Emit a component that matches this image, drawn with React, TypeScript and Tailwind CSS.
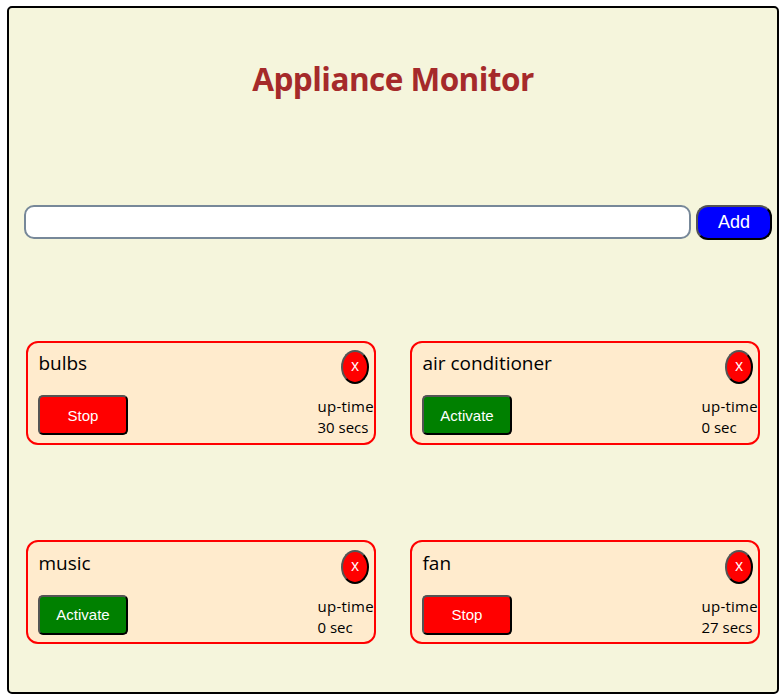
type Appliance = { name: string; running: boolean; time: string };

const rows: Appliance[][] = [
  [
    { name: 'bulbs', running: true, time: '30 secs' },
    { name: 'air conditioner', running: false, time: '0 sec' },
  ],
  [
    { name: 'music', running: false, time: '0 sec' },
    { name: 'fan', running: true, time: '27 secs' },
  ],
];

function Card({ item }: { item: Appliance }) {
  return (
    <section className="h-[104px] w-[350px] rounded-xl border-2 border-[red] bg-[#ffebcd] pl-2.5 pt-[7.2px]">
      <div className="flex h-[34px] items-start justify-between pr-[5px]">
        <h2 className="whitespace-nowrap pl-[0.5px] text-[19px] leading-[26px] tracking-[-0.03px]">{item.name}</h2>
        <button className="h-[34px] w-7 rounded-[50%] border-2 border-black bg-[red] pb-0.5 font-['Open_Sans',sans-serif] text-[15.5px] leading-none text-white [border-style:outset]">
          x
        </button>
      </div>
      <div className="flex items-start justify-between pt-[11.2px]">
        <button
          className={`h-10 w-[90px] rounded-[5px] border-2 border-black pt-[1.6px] font-['Liberation_Sans',Arial,sans-serif] text-[15px] text-white [border-style:outset] ${item.running ? 'bg-[red]' : 'bg-[green]'}`}
        >
          {item.running ? 'Stop' : 'Activate'}
        </button>
        <div className="w-[56.5px] whitespace-nowrap pt-px text-[15px] leading-[21px]">
          <p className="tracking-[0.25px]">up-time</p>
          <p>{item.time}</p>
        </div>
      </div>
    </section>
  );
}

export default function App() {
  return (
    <div className="h-[698px] bg-white pl-[7px] pt-1.5 font-['Open_Sans',sans-serif] text-black">
      <main className="h-[688px] w-[772px] rounded-[5px] border-2 border-black bg-[#f5f5dc]">
        <h1 className="pt-[49px] text-center text-[31.5px] font-bold leading-[43px] tracking-[-0.53px] text-[brown]">
          Appliance Monitor
        </h1>
        <form className="mt-[105px] flex h-[35px] items-start gap-[5px] pl-[15px]">
          <input className="h-[34px] w-[667px] rounded-[10px] border-2 border-[#778899] bg-white px-2 outline-none" />
          <button
            type="button"
            className="h-[35px] w-[76px] rounded-xl border-2 border-black bg-[blue] font-['Liberation_Sans',Arial,sans-serif] text-[18px] text-white [border-style:outset]"
          >
            Add
          </button>
        </form>
        <div className="mt-[100.7px] flex flex-col gap-[95.7px] pl-[17px]">
          {rows.map((row, i) => (
            <div key={i} className="flex gap-[34px]">
              {row.map((item) => (
                <Card key={item.name} item={item} />
              ))}
            </div>
          ))}
        </div>
      </main>
    </div>
  );
}
